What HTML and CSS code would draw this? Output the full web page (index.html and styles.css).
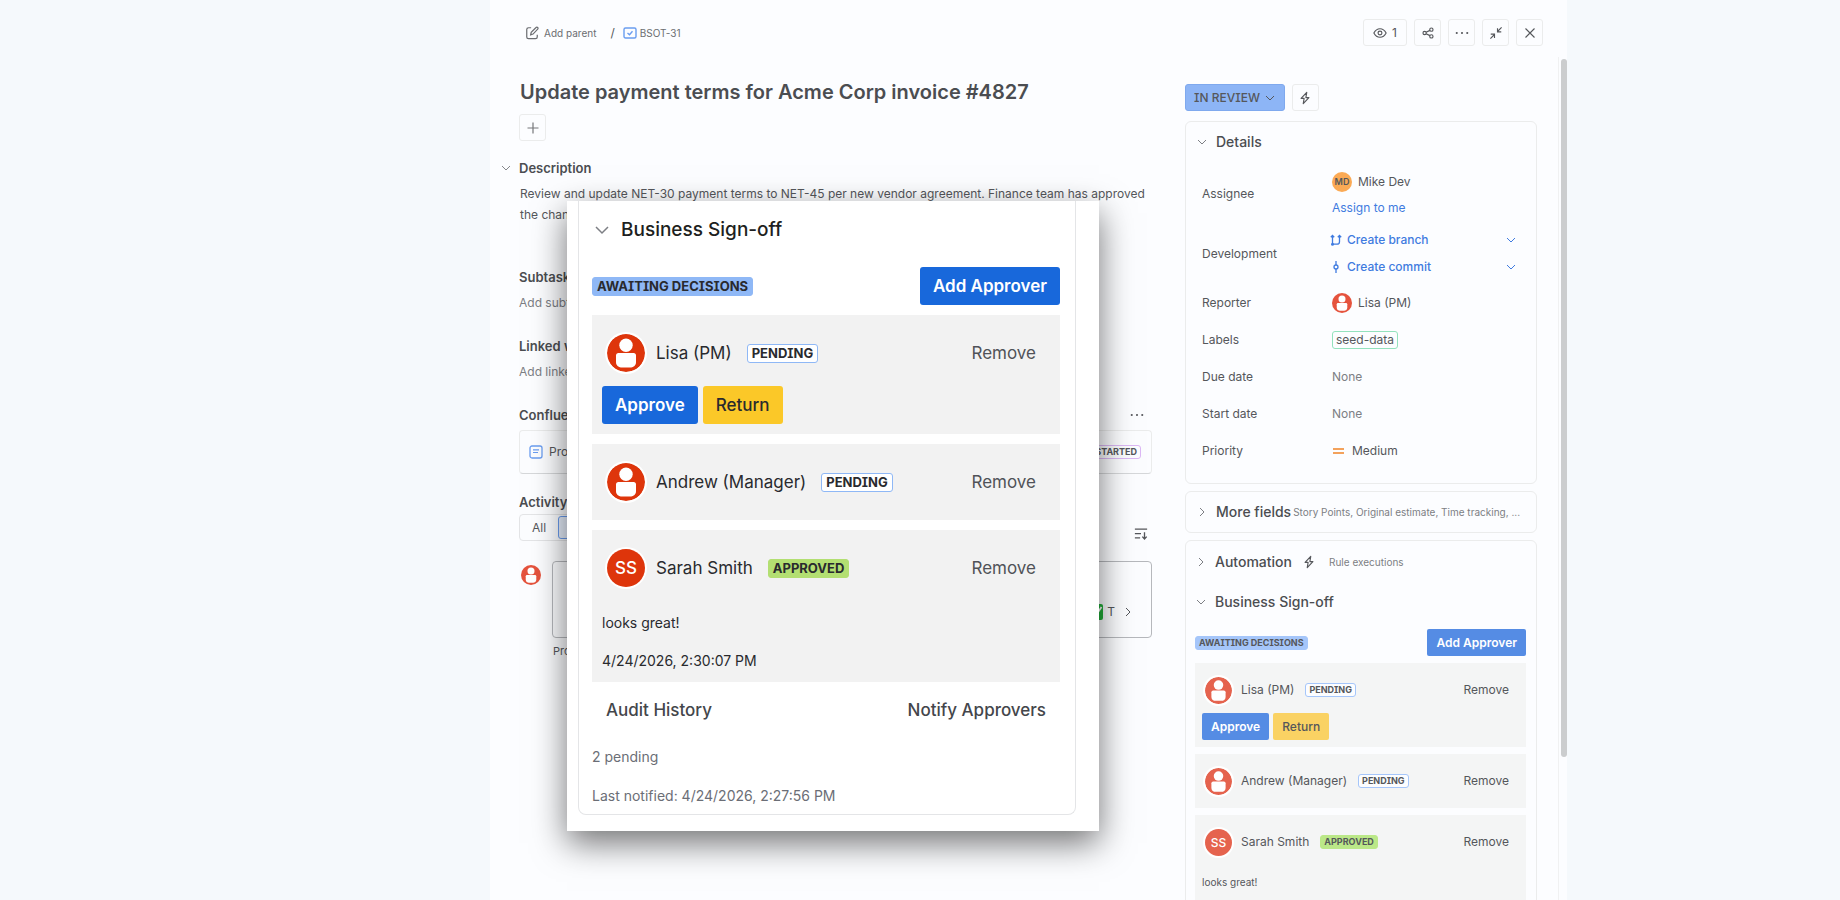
FILE: index.html
```html
<!DOCTYPE html>
<html lang="en">
<head>
  <meta charset="UTF-8" />
  <meta name="viewport" content="width=device-width, initial-scale=1" />
  <title>BSOT-31 Update payment terms</title>
  <link rel="stylesheet" href="styles.css">
</head>
<body>
  <!-- shared icons -->
  <svg class="sprite" aria-hidden="true">
    <symbol id="chev-down" viewBox="0 0 12 12"><path d="M2 4l4 4 4-4" fill="none" stroke="currentColor" stroke-width="1"/></symbol>
    <symbol id="chev-right" viewBox="0 0 12 12"><path d="M4 2l4 4-4 4" fill="none" stroke="currentColor" stroke-width="1"/></symbol>
    <symbol id="dots" viewBox="0 0 16 16"><g fill="currentColor"><circle cx="2" cy="8" r="1.2"/><circle cx="8" cy="8" r="1.2"/><circle cx="14" cy="8" r="1.2"/></g></symbol>
    <symbol id="bolt" viewBox="0 0 16 16"><path d="M10 1.500L3.500 8.500H7L6 14.500L12.500 7.500H9z" fill="none" stroke="currentColor" stroke-width="1.300" stroke-linejoin="round"/></symbol>
    <symbol id="person" viewBox="0 0 38 38"><circle cx="19" cy="19" r="19" fill="currentColor"/><circle cx="19" cy="11.300" r="6.700" fill="#fff"/><path d="M11.500 19h15a2.500 2.500 0 0 1 2.500 2.500V28c0 4-3 5.500-6 5.500h-8c-3 0-6-1.500-6-5.500v-6.500a2.500 2.500 0 0 1 2.500-2.500z" fill="#fff"/></symbol>
  </svg>

  <div class="page">
    <div class="issue">
      <header class="topbar">
        <nav class="crumbs">
          <a href="#" class="crumb">
            <svg class="icon-14" viewBox="0 0 16 16"><path d="M7 2H4a2 2 0 0 0-2 2v8.500a2 2 0 0 0 2 2h8a2 2 0 0 0 2-2V10M6.500 10l.6-2.800 5.500-5.500a1.300 1.300 0 0 1 1.900 0 1.300 1.300 0 0 1 0 1.900L9.200 9.200z" fill="none" stroke="currentColor" stroke-width="1.400"/></svg>
            Add parent
          </a>
          <span class="slash">/</span>
          <a href="#" class="crumb">
            <svg class="icon-14 blue" viewBox="0 0 14 14"><rect x="1" y="2" width="12" height="10" rx="1.500" fill="none" stroke="currentColor" stroke-width="1.400"/><path d="M4.500 7l2 1.700 3-3.400" fill="none" stroke="currentColor" stroke-width="1.400"/></svg>
            BSOT-31
          </a>
        </nav>
        <div class="actions">
          <button class="tool watch" aria-label="Watch"><svg class="icon-14" viewBox="0 0 16 16"><path d="M1 8c1.600-3 4-4.800 7-4.800S13.400 5 15 8c-1.600 3-4 4.800-7 4.800S2.600 11 1 8z" fill="none" stroke="currentColor" stroke-width="1.300"/><circle cx="8" cy="8" r="2.200" fill="none" stroke="currentColor" stroke-width="1.300"/></svg>1</button>
          <button class="tool" aria-label="Share"><svg class="icon-12" viewBox="0 0 16 16"><g fill="none" stroke="currentColor" stroke-width="1.500"><circle cx="3.500" cy="8" r="2.200"/><circle cx="12.500" cy="3.500" r="2.200"/><circle cx="12.500" cy="12.500" r="2.200"/><path d="M5.500 7l5-2.500M5.500 9l5 2.500"/></g></svg></button>
          <button class="tool" aria-label="More"><svg class="icon-14"><use href="#dots"/></svg></button>
          <button class="tool" aria-label="Collapse"><svg class="icon-12" viewBox="0 0 16 16"><path d="M15.500 .5L10 6M10 1.500V6.500h5M.5 15.500L6 10M1 9.500h5v5" fill="none" stroke="currentColor" stroke-width="1.500"/></svg></button>
          <button class="tool" aria-label="Close"><svg class="icon-12" viewBox="0 0 16 16"><path d="M2 2l12 12M14 2L2 14" fill="none" stroke="currentColor" stroke-width="1.500"/></svg></button>
        </div>
      </header>

      <div class="columns">
        <main class="main">
          <h1>Update payment terms for Acme Corp invoice #4827</h1>
          <button class="tool add" aria-label="Add"><svg class="icon-12" viewBox="0 0 12 12"><path d="M6 .5v11M.5 6h11" fill="none" stroke="currentColor" stroke-width="1.200"/></svg></button>

          <section class="description">
            <h2><svg class="icon-12 toggle"><use href="#chev-down"/></svg>Description</h2>
            <p>Review and update NET-30 payment terms to NET-45 per new vendor agreement. Finance team has approved the change.</p>
          </section>
          <section class="block">
            <h2>Subtasks</h2>
            <a href="#" class="hint">Add subtask</a>
          </section>
          <section class="block">
            <h2>Linked work items</h2>
            <a href="#" class="hint">Add linked work item</a>
          </section>
          <section class="block">
            <div class="split">
              <h2>Confluence content</h2>
              <button class="plain options" aria-label="Content options"><svg class="icon-14"><use href="#dots"/></svg></button>
            </div>
            <div class="doc">
              <svg class="icon-14 blue" viewBox="0 0 14 14"><rect x="1" y="1" width="12" height="12" rx="2" fill="none" stroke="currentColor" stroke-width="1.300"/><path d="M4 4.800h6M4 7.500h5" fill="none" stroke="currentColor" stroke-width="1.200"/></svg>
              <span>Project</span>
              <span class="badge started">NOT STARTED</span>
            </div>
          </section>
          <section class="activity">
            <h2>Activity</h2>
            <div class="split tools">
              <div class="tabs">
                <button class="tab">All</button>
                <button class="tab current">Comments</button>
              </div>
              <button class="plain" aria-label="Sort"><svg class="icon-14" viewBox="0 0 16 16"><path d="M1 2.500h14M1 7.500h7M1 12.500h6M12 6v7.500M9.500 11l2.500 2.700 2.500-2.700" fill="none" stroke="currentColor" stroke-width="1.500"/></svg></button>
            </div>
            <div class="comment">
              <svg class="avatar-20"><use href="#person"/></svg>
              <div class="editor">
                <svg class="check" viewBox="0 0 14 16"><rect width="14" height="16" rx="2" fill="#22b03a"/><path d="M3.500 8l3 4 6-9" fill="none" stroke="#fff" stroke-width="1.800"/></svg>
                <span>T</span>
                <svg class="icon-12"><use href="#chev-right"/></svg>
              </div>
            </div>
            <p class="tip">Pro tip</p>
          </section>
        </main>

        <aside class="side">
          <div class="status-row">
            <button class="status">IN REVIEW <svg class="icon-12"><use href="#chev-down"/></svg></button>
            <button class="tool" aria-label="Automation"><svg class="icon-14"><use href="#bolt"/></svg></button>
          </div>

          <section class="card details">
            <h3><svg class="icon-12"><use href="#chev-down"/></svg>Details</h3>
            <dl>
              <dt>Assignee</dt>
              <dd class="assignee">
                <span class="person"><span class="md">MD</span>Mike Dev</span>
                <a href="#">Assign to me</a>
              </dd>
              <dt>Development</dt>
              <dd class="dev">
                <a href="#"><svg class="icon-12" viewBox="0 0 12 12"><path d="M2.500 1.500V10.500M2.500 10.200h4.500a2.500 2.500 0 0 0 2.500-2.500V2M.8 3.300l1.700-1.800 1.700 1.800M7.800 3.300l1.700-1.800 1.700 1.800" fill="none" stroke="currentColor" stroke-width="1.300"/><circle cx="2.500" cy="10.200" r="1.500" fill="currentColor"/></svg>Create branch<svg class="icon-12 end"><use href="#chev-down"/></svg></a>
                <a href="#"><svg class="icon-12" viewBox="0 0 12 12"><path d="M6 0v4M6 8v4" stroke="currentColor" stroke-width="1.300"/><circle cx="6" cy="6" r="2" fill="none" stroke="currentColor" stroke-width="1.300"/></svg>Create commit<svg class="icon-12 end"><use href="#chev-down"/></svg></a>
              </dd>
              <dt>Reporter</dt>
              <dd><span class="person"><svg class="avatar-20"><use href="#person"/></svg>Lisa (PM)</span></dd>
              <dt>Labels</dt>
              <dd><span class="label">seed-data</span></dd>
              <dt>Due date</dt>
              <dd class="none">None</dd>
              <dt>Start date</dt>
              <dd class="none">None</dd>
              <dt>Priority</dt>
              <dd class="priority"><svg class="icon-14" viewBox="0 0 14 14"><path d="M1 5h11M1 9h11" stroke="#f3a25c" stroke-width="1.800"/></svg>Medium</dd>
            </dl>
          </section>

          <section class="card more">
            <h3><svg class="icon-12"><use href="#chev-right"/></svg>More fields</h3>
            <span class="note">Story Points, Original estimate, Time tracking, ...</span>
          </section>

          <section class="card panel">
            <div class="auto">
              <h3><svg class="icon-12"><use href="#chev-right"/></svg>Automation</h3>
              <svg class="icon-14"><use href="#bolt"/></svg>
              <span class="note">Rule executions</span>
            </div>
            <div class="signoff">
              <h3><svg class="chev"><use href="#chev-down"/></svg>Business Sign-off</h3>
              <div class="summary">
                <span class="badge waiting">AWAITING DECISIONS</span>
                <button class="btn primary">Add Approver</button>
              </div>
              <div class="approver">
                <div class="who">
                  <svg class="avatar"><use href="#person"/></svg>
                  <span>Lisa (PM)</span>
                  <span class="badge pending">PENDING</span>
                  <button class="remove">Remove</button>
                </div>
                <div class="decide">
                  <button class="btn primary">Approve</button>
                  <button class="btn warn">Return</button>
                </div>
              </div>
              <div class="approver">
                <div class="who">
                  <svg class="avatar"><use href="#person"/></svg>
                  <span>Andrew (Manager)</span>
                  <span class="badge pending">PENDING</span>
                  <button class="remove">Remove</button>
                </div>
              </div>
              <div class="approver last">
                <div class="who">
                  <span class="avatar initials">SS</span>
                  <span>Sarah Smith</span>
                  <span class="badge approved">APPROVED</span>
                  <button class="remove">Remove</button>
                </div>
                <p>looks great!</p>
              </div>
            </div>
          </section>
        </aside>
        <div class="scroll"><div class="thumb"></div></div>
      </div>

      <!-- enlarged sign-off panel over the issue -->
      <div class="popup">
        <div class="signoff large">
          <h3><svg class="chev"><use href="#chev-down"/></svg>Business Sign-off</h3>
          <div class="summary">
            <span class="badge waiting">AWAITING DECISIONS</span>
            <button class="btn primary">Add Approver</button>
          </div>
          <div class="approver">
            <div class="who">
              <svg class="avatar"><use href="#person"/></svg>
              <span>Lisa (PM)</span>
              <span class="badge pending">PENDING</span>
              <button class="remove">Remove</button>
            </div>
            <div class="decide">
              <button class="btn primary">Approve</button>
              <button class="btn warn">Return</button>
            </div>
          </div>
          <div class="approver">
            <div class="who">
              <svg class="avatar"><use href="#person"/></svg>
              <span>Andrew (Manager)</span>
              <span class="badge pending">PENDING</span>
              <button class="remove">Remove</button>
            </div>
          </div>
          <div class="approver">
            <div class="who">
              <span class="avatar initials">SS</span>
              <span>Sarah Smith</span>
              <span class="badge approved">APPROVED</span>
              <button class="remove">Remove</button>
            </div>
            <p>looks great!</p>
            <p>4/24/2026, 2:30:07 PM</p>
          </div>
          <div class="links">
            <button>Audit History</button>
            <button>Notify Approvers</button>
          </div>
          <p class="meta">2 pending</p>
          <p class="meta">Last notified: 4/24/2026, 2:27:56 PM</p>
        </div>
      </div>
    </div>
  </div>
</body>
</html>
```
FILE: styles.css
```css
* {
  box-sizing: border-box;
}
body {
  margin: 0;
  background: #f5f9fc;
  font-family: Inter, "Liberation Sans", sans-serif;
  font-size: 12px;
  line-height: 16px;
  color: #55575b;
}
h1, h2, h3, p, dl, dd {
  margin: 0;
}
button {
  font: inherit;
  color: inherit;
  background: none;
  border: none;
  padding: 0;
  cursor: pointer;
}
a {
  color: #3f7be0;
  text-decoration: none;
}
svg {
  display: block;
  flex: none;
}
.sprite {
  position: absolute;
  width: 0;
  height: 0;
}
.icon-12 {
  width: 12px;
  height: 12px;
}
.icon-14 {
  width: 14px;
  height: 14px;
}
.blue {
  color: #6a9df0;
}
.avatar-20 {
  width: 20px;
  height: 20px;
  color: #e5533d;
}

.page {
  display: grid;
  grid-template-columns: 490fr 1077fr 273fr;
  height: 100vh;
  overflow: hidden;
}
.issue {
  grid-column: 2;
  position: relative;
  display: flex;
  flex-direction: column;
  min-height: 0;
  background: #fcfdff;
}

/* top bar */
.topbar {
  display: flex;
  justify-content: space-between;
  padding: 19px 24px 11px 35px;
}
.crumbs {
  display: flex;
  align-items: center;
  font-size: 10px;
}
.crumb {
  display: flex;
  align-items: center;
  gap: 5px;
  color: #6b6d71;
}
.crumb .blue {
  margin-right: -2px;
}
.slash {
  padding: 0 8px 0 14px;
  font-size: 12px;
}
.actions {
  display: flex;
  gap: 7px;
}
.tool {
  display: flex;
  align-items: center;
  justify-content: center;
  gap: 5px;
  width: 27px;
  height: 27px;
  border: 1px solid #ebecec;
  border-radius: 3px;
}
.watch {
  width: 44px;
}

.columns {
  display: flex;
  flex: 1;
  min-height: 0;
}
.main {
  flex: 1;
  min-width: 0;
  padding: 20px 33px 0 29px;
}
h1 {
  font-size: 20px;
  line-height: 30px;
  font-weight: 600;
  padding-left: 1px;
  color: #4b4d51;
}
.add {
  margin-top: 7px;
  color: #75777a;
}
h2 {
  font-size: 13px;
  line-height: 18px;
  font-weight: 600;
  color: #4b4d51;
}
.description {
  margin-top: 18px;
}
.description h2 {
  display: flex;
  align-items: center;
}
.toggle {
  margin: 0 7px 0 -19px;
  color: #85878b;
}
.description p {
  margin-top: 6px;
  padding-left: 1px;
  line-height: 21px;
}
.block {
  margin-top: 25px;
}
.description + .block {
  margin-top: 43px;
}
.hint {
  display: block;
  margin-top: 9px;
  margin-bottom: 26px;
  color: #7d7f84;
  white-space: nowrap;
}
.split {
  display: flex;
  justify-content: space-between;
  align-items: center;
}
.tools {
  align-items: flex-end;
}
.plain {
  margin-right: 4px;
}
.options {
  margin-right: 8px;
}
.doc {
  display: flex;
  align-items: center;
  gap: 6px;
  height: 44px;
  margin-top: 6px;
  padding: 0 10px 0 9px;
  border: 1px solid #ebecec;
  border-bottom-color: #d6d8da;
  border-radius: 4px;
}
.activity {
  margin-top: 19px;
}
.tabs {
  display: flex;
  gap: 9px;
  height: 27px;
  margin-top: 3px;
  padding: 1px 2px 1px 9px;
  border: 1px solid #e4e5e7;
  border-radius: 4px;
}
.tab {
  padding: 0 3px;
}
.current {
  padding: 0 12px;
  border: 1px solid #6a9df0;
  border-radius: 3px;
  background: #e9f1fe;
}
.comment {
  display: flex;
  gap: 11px;
  margin-top: 20px;
}
.comment > .avatar-20 {
  margin: 4px 0 0 2px;
}
.editor {
  display: flex;
  flex: 1;
  align-items: flex-end;
  justify-content: flex-end;
  gap: 4px;
  height: 77px;
  padding: 17px;
  border: 1px solid #b6b8bc;
  border-radius: 4px;
}
.editor .icon-12 {
  margin: 0 0 2px 3px;
}
.check {
  width: 14px;
  height: 16px;
}
.tip {
  margin: 5px 0 0 34px;
  font-size: 11px;
}

/* side column */
.side {
  flex: 0 0 352px;
  margin-right: 21px;
  padding-top: 27px;
}
.status-row {
  display: flex;
  gap: 7px;
}
.status {
  display: flex;
  align-items: center;
  gap: 4px;
  height: 27px;
  padding: 0 8px;
  font-size: 12px;
  font-weight: 500;
  background: #8db5f6;
  border: 1px solid #7fa9ee;
  border-radius: 3px;
  font-feature-settings: "cv08";
}
.card {
  border: 1px solid #ebecec;
  border-radius: 6px;
}
.card + .card {
  margin-top: 7px;
}
h3 {
  display: flex;
  align-items: center;
  gap: 8px;
  font-size: 14px;
  line-height: 20px;
  font-weight: 500;
  color: #4b4d51;
  white-space: nowrap;
}
h3 svg {
  color: #7d7f84;
}
.details {
  margin-top: 10px;
  padding: 10px 16px 13px 10px;
}
.details dl {
  display: grid;
  grid-template-columns: 130px 1fr;
  grid-template-rows: 59px 61px;
  grid-auto-rows: 37px;
  align-items: center;
  margin-top: 12px;
  padding: 0 0 1px 6px;
}
.person,
.priority {
  display: flex;
  align-items: center;
  gap: 6px;
}
.md {
  width: 20px;
  height: 20px;
  line-height: 20px;
  border-radius: 50%;
  background: #fbaa55;
  font-size: 9px;
  font-weight: 600;
  text-align: center;
}
.assignee,
.dev {
  display: flex;
  flex-direction: column;
  gap: 8px;
}
.dev {
  gap: 11px;
}
.dev a {
  display: flex;
  align-items: center;
  gap: 5px;
  margin-left: -2px;
  font-weight: 500;
}
.dev .end {
  margin-left: auto;
  margin-right: 3px;
}
.label {
  display: inline-block;
  padding: 0 3px;
  border: 1px solid #93e2bd;
  border-radius: 3px;
}
.none {
  color: #7d7f84;
}
.note {
  font-size: 10px;
  color: #7d7f84;
  white-space: nowrap;
}
.more {
  display: flex;
  align-items: center;
  gap: 2px;
  height: 42px;
  padding: 0 10px;
}
.panel {
  padding: 11px 10px 11px 9px;
}
.auto {
  display: flex;
  align-items: center;
  gap: 10px;
  margin-bottom: 20px;
}
.auto .note {
  padding-left: 3px;
}
.scroll {
  flex: 0 0 9px;
  padding: 2px 0 0 2px;
  border-left: 1px solid #f0f1f2;
}
.thumb {
  height: 83%;
  border-radius: 3px;
  background: #cbcdce;
}

/* sign-off panel, the sizes are switched by .large */
.signoff {
  --red: #e5634e;
  --blue: #558ce4;
  --yellow: #fad263;
  --green: #bbe888;
  --pill: #a5c6fa;
  --row: #f4f5f5;
  --avatar: 27px;
  --btn: 27px;
  --gap: 7px;
}
.chev {
  width: 12px;
  height: 12px;
}
.summary {
  display: flex;
  align-items: center;
  justify-content: space-between;
  margin-top: 17px;
}
.badge {
  padding: 0 3px;
  border: 1px solid;
  border-radius: 3px;
  font-size: 9px;
  line-height: 12px;
  font-weight: 700;
  white-space: nowrap;
  font-feature-settings: "cv08";
}
.waiting {
  background: var(--pill);
  border-color: var(--pill);
}
.pending {
  background: #fcfdff;
  border-color: #a5c6fa;
}
.approved {
  background: var(--green);
  border-color: var(--green);
}
.started {
  margin-left: auto;
  border-color: #dcb8f5;
}
.btn {
  height: var(--btn);
  padding: 0 9px;
  border-radius: 2px;
  font-weight: 500;
}
.primary {
  background: var(--blue);
  color: #fff;
  font-weight: 600;
}
.warn {
  background: var(--yellow);
}
.approver {
  margin-top: var(--gap);
  padding: var(--gap);
  background: var(--row);
}
.last {
  padding-bottom: 40px;
}
.who {
  display: flex;
  align-items: center;
  height: 40px;
  padding: 0 10px 0 3px;
}
.avatar {
  width: var(--avatar);
  height: var(--avatar);
  margin-right: 9px;
  border-radius: 50%;
  box-shadow: 0 0 0 2px #fff;
  color: var(--red);
}
.initials {
  background: var(--red);
  color: #fff;
  font-weight: 500;
  line-height: var(--avatar);
  text-align: center;
}
.who .badge {
  margin-left: 11px;
}
.remove {
  margin-left: auto;
}
.decide {
  display: flex;
  gap: 4px;
  margin-top: 3px;
}
.approver p {
  margin-top: 12px;
  font-size: 10px;
}

.popup {
  position: absolute;
  top: 201px;
  left: 77px;
  width: 532px;
  padding: 0 23px 16px 11px;
  background: #fff;
  box-shadow: 0 12px 32px rgba(0, 0, 0, 0.55);
}
.large {
  --red: #de350b;
  --blue: #1868db;
  --yellow: #fbc828;
  --green: #b3df72;
  --pill: #8fb8f6;
  --row: #f2f2f2;
  --avatar: 38px;
  --btn: 38px;
  --gap: 10px;
  padding: 15px 15px 7px 13px;
  border: 1px solid #e4e5e7;
  border-top: none;
  border-radius: 0 0 8px 8px;
  font-size: 17px;
  line-height: 22px;
  color: #292a2e;
}
.large h3 {
  gap: 10px;
  font-size: 19px;
  line-height: 28px;
  padding-left: 1px;
  color: #1e1f21;
}
.large .chev {
  width: 18px;
  height: 18px;
}
.large .summary {
  margin-top: 23px;
}
.large .badge {
  padding: 0 4px;
  font-size: 13px;
  line-height: 17px;
}
.large .pending {
  background: #fff;
  border-color: #8fb8f6;
}
.large .btn {
  padding: 0 13px;
  border-radius: 3px;
}
.large .who {
  height: 56px;
  padding: 0 14px 0 5px;
}
.large .avatar {
  margin-right: 11px;
}
.large .who .badge {
  margin-left: 15px;
}
.large .remove {
  color: #505258;
}
.large .decide {
  gap: 5px;
  margin-top: 5px;
}
.large .approver p {
  margin-top: 16px;
  font-size: 14px;
}
.links {
  display: flex;
  justify-content: space-between;
  margin-top: 9px;
  padding: 0 14px;
  line-height: 38px;
  font-weight: 500;
  color: #44464b;
}
.meta {
  margin-top: 17px;
  font-size: 14px;
  color: #6b6e76;
}
```
